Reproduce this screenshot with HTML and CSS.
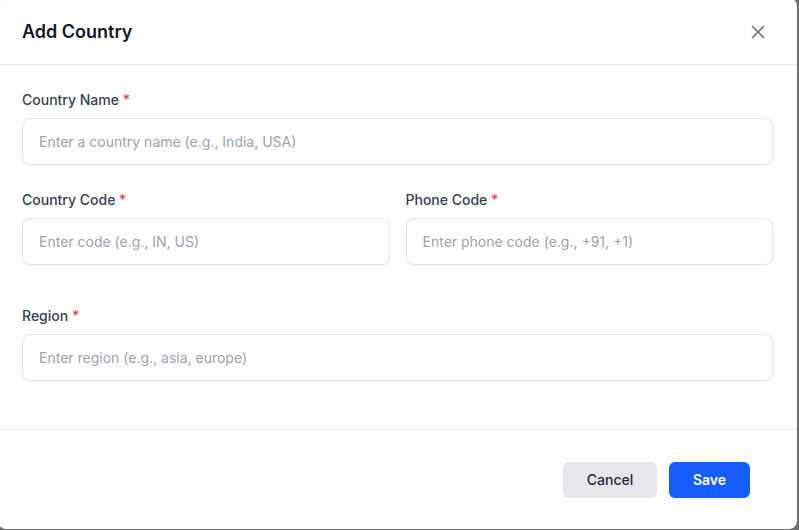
FILE: index.html
```html
<!DOCTYPE html>
<html lang="en">
<head>
<meta charset="utf-8">
<title>Add Country</title>
<link rel="stylesheet" href="styles.css">
</head>
<body>
<div class="modal">
  <div class="modal-header">
    <h2 class="modal-title">Add Country</h2>
    <button class="close-btn" aria-label="Close">
      <svg width="14" height="14" viewBox="0 0 14 14" fill="none" stroke="currentColor" stroke-width="1.6" stroke-linecap="round"><path d="M1.5 1.5L12.5 12.5M12.5 1.5L1.5 12.5"/></svg>
    </button>
  </div>
  <div class="modal-body">
    <div class="field">
      <label class="label">Country Name <span class="req">*</span></label>
      <input class="input" type="text" placeholder="Enter a country name (e.g., India, USA)">
    </div>
    <div class="row">
      <div class="field">
        <label class="label">Country Code <span class="req">*</span></label>
        <input class="input" type="text" placeholder="Enter code (e.g., IN, US)">
      </div>
      <div class="field">
        <label class="label">Phone Code <span class="req">*</span></label>
        <input class="input" type="text" placeholder="Enter phone code (e.g., +91, +1)">
      </div>
    </div>
    <div class="field region">
      <label class="label">Region <span class="req">*</span></label>
      <input class="input" type="text" placeholder="Enter region (e.g., asia, europe)">
    </div>
  </div>
  <div class="modal-footer">
    <button class="btn btn-cancel">Cancel</button>
    <button class="btn btn-save">Save</button>
  </div>
</div>
</body>
</html>
```
FILE: styles.css
```css
* { box-sizing: border-box; }
html, body { margin: 0; padding: 0; }
body {
  background: #6e6e6e;
  font-family: Inter, "Liberation Sans", sans-serif;
  overflow: hidden;
  height: 530px;
}
.modal {
  width: 799px;
  margin: -2px 0 0 -2px;
  background: #fff;
  border-radius: 8px;
}
.modal-header {
  display: flex;
  align-items: center;
  justify-content: space-between;
  height: 67px;
  padding: 2px 32px 0 24px;
  border-bottom: 1px solid #e5e7eb;
}
.modal-title {
  margin: 0;
  font-size: 18px;
  font-weight: 600;
  color: #111827;
  line-height: 28px;
}
.close-btn {
  background: none;
  border: 0;
  padding: 0;
  color: #6b7280;
  display: flex;
  cursor: pointer;
}
.modal-body {
  padding: 25px 24px 48px 24px;
}
.field {
  display: flex;
  flex-direction: column;
}
.label {
  font-size: 14px;
  line-height: 20px;
  font-weight: 500;
  color: #374151;
  margin-bottom: 8px;
}
.req { color: #ef4444; }
.input {
  height: 47px;
  border: 1px solid #e5e7eb;
  border-radius: 8px;
  padding: 0 16px;
  font-family: inherit;
  font-size: 14px;
  color: #111827;
  box-shadow: 0 1px 2px rgba(0,0,0,0.05);
  outline: none;
}
.input::placeholder { color: #9ca3af; }
.row {
  display: grid;
  grid-template-columns: 1fr 1fr;
  gap: 16px;
  margin-top: 25px;
}
.region { margin-top: 41px; }
.modal-footer {
  display: flex;
  justify-content: flex-end;
  gap: 12px;
  padding: 32px 47px 31px 24px;
  border-top: 1px solid #e5e7eb;
}
.btn {
  height: 36px;
  border: 0;
  border-radius: 6px;
  font-family: inherit;
  font-size: 14px;
  line-height: 35px;
  padding: 0 0 1px;
  cursor: pointer;
}
.btn-cancel {
  width: 94px;
  background: #e5e7eb;
  color: #1f2937;
  font-weight: 500;
}
.btn-save {
  width: 81px;
  background: #165dfb;
  color: #fff;
  font-weight: 600;
}
```
